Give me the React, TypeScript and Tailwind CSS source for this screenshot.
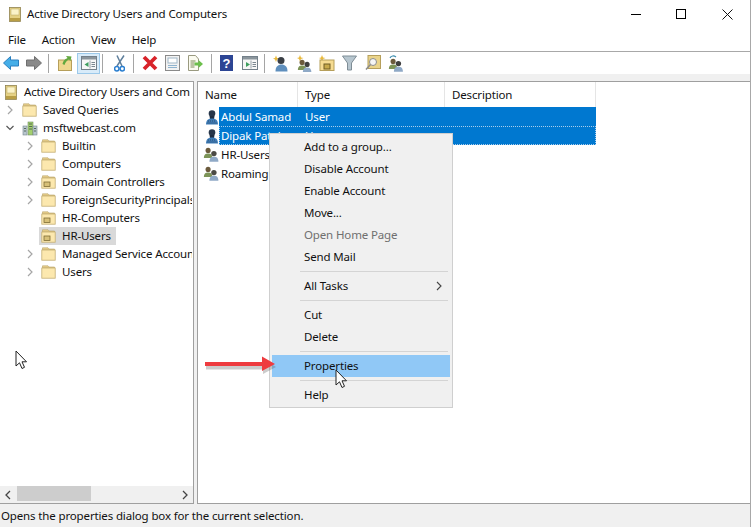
import React from "react";

const Folder = ({ ou = false }: { ou?: boolean }) => (
  <svg width="15" height="14" viewBox="0 0 15 14" className="shrink-0">
    <path d="M1.500 3 L1.500 0.800 L7 0.800 L8 2 L13.500 2 L13.500 3z" fill="#e8cf8a" stroke="#b9a469" strokeWidth="0.600" />
    <rect x="0.800" y="3" width="13.400" height="10.200" fill="#fce8ae" stroke="#c4ae72" strokeWidth="0.800" />
    {ou && <rect x="3" y="7" width="6" height="4.500" fill="#d7c078" stroke="#7d6b35" strokeWidth="0.800" />}
  </svg>
);

const BookIcon = () => (
  <svg width="12" height="15" viewBox="0 0 12 15" className="shrink-0">
    <rect x="0.500" y="0.500" width="11" height="14" fill="#e5d184" stroke="#8f8250" strokeWidth="0.800" />
    <rect x="2" y="2" width="8" height="6" fill="#fbf3c8" stroke="#b9a763" strokeWidth="0.500" />
    <rect x="1" y="11" width="10" height="3" fill="#b99e45" />
  </svg>
);

const Person = ({ x = 0, y = 0, s = 1, head = "#3d4a5c", body = "#3f74a8" }: { x?: number; y?: number; s?: number; head?: string; body?: string }) => (
  <g transform={`translate(${x} ${y}) scale(${s})`}>
    <circle cx="6" cy="4" r="3" fill={head} />
    <path d="M1 13 C1 9 3 7.500 6 7.500 C9 7.500 11 9 11 13z" fill={body} />
  </g>
);

const UserIcon = () => (
  <svg width="14" height="16" viewBox="0 0 14 16" className="shrink-0">
    <circle cx="7" cy="4.500" r="3.300" fill="#27364a" />
    <path d="M4.500 7 L9.500 7 L9 10 L5 10z" fill="#1f2d40" />
    <path d="M1 15.500 C1 11 3.500 9.500 7 9.500 C10.500 9.500 13 11 13 15.500z" fill="#3f7db8" />
    <path d="M3 12h8M2.500 14h9" stroke="#27364a" strokeWidth="0.700" strokeDasharray="1 1" />
  </svg>
);

const GroupIcon = () => (
  <svg width="16" height="15" viewBox="0 0 16 15" className="shrink-0">
    <Person x={0} y={0} s={0.85} head="#6b5a3c" body="#7d9458" />
    <Person x={5.500} y={3} s={0.9} head="#4b4a44" body="#8fa9c6" />
  </svg>
);

const Domain = () => (
  <svg width="16" height="16" viewBox="0 0 16 16" className="shrink-0">
    <rect x="1" y="6" width="4" height="9" fill="#b9c7cf" stroke="#76868e" strokeWidth="0.600" />
    <rect x="6" y="2" width="5" height="13" fill="#a3d06e" stroke="#6f8a60" strokeWidth="0.600" />
    <rect x="11" y="6" width="4" height="9" fill="#b9c7cf" stroke="#76868e" strokeWidth="0.600" />
    <path d="M7 4h3M7 6.500h3M7 9h3M2 8.500h2M2 11h2M12 8.500h2M12 11h2" stroke="#4d5e50" strokeWidth="0.900" />
  </svg>
);

const Chev = ({ open = false }: { open?: boolean }) => (
  <svg width="8" height="10" viewBox="0 0 8 10" className="shrink-0">
    {open ? <path d="M0.500 3 L4 6.500 L7.500 3" fill="none" stroke="#555" strokeWidth="1.200" /> : <path d="M2 1 L6 5 L2 9" fill="none" stroke="#a6a6a6" strokeWidth="1.200" />}
  </svg>
);

const Sep = ({ cls }: { cls: string }) => <div className={`w-px h-[19px] bg-[#a5a5a5] shrink-0 ${cls}`} />;

const Win = ({ arrow }: { arrow: "l" | "r" }) => (
  <svg width="16" height="14" viewBox="0 0 16 14" className="shrink-0">
    <rect x="0.500" y="0.500" width="15" height="13" fill="#f7f7f7" stroke="#74808a" />
    <rect x="1" y="1" width="14" height="2.500" fill="#8b959c" />
    <path d="M9 4.500v8" stroke="#9aa4aa" />
    {arrow === "l" ? <path d="M7.500 6 L3.500 8.500 L7.500 11z" fill="#3f9e5f" /> : <path d="M4 6 L8 8.500 L4 11z" fill="#3f9e5f" />}
    <path d="M10.500 6.500h3.500M10.500 8.500h3.500M10.500 10.500h3.500" stroke="#7b8790" />
  </svg>
);

const Toolbar = () => (
  <div className="h-[22px] flex items-center pl-[3px] bg-white">
    <svg width="16" height="14" viewBox="0 0 16 14" className="shrink-0"><path d="M0.500 7 L7.500 0.500 V4 H15.500 V10 H7.500 V13.500z" fill="#45aee8" stroke="#2a7fbf" /></svg>
    <svg width="16" height="14" viewBox="0 0 16 14" className="shrink-0 ml-[7px]"><path d="M15.500 7 L8.500 0.500 V4 H0.500 V10 H8.500 V13.500z" fill="#8a8a8a" stroke="#6f6f6f" /></svg>
    <Sep cls="ml-[6px]" />
    <svg width="14" height="16" viewBox="0 0 14 16" className="shrink-0 ml-[9px]"><rect x="0.500" y="5" width="13" height="10.500" fill="#efd78e" stroke="#b69f5b" /><path d="M4.500 9 C5.500 5 7.500 4 9.500 3 L8 1 L13.500 1.500 L12.500 6 L11 4.500 C9 5.500 7.500 7 6.500 10z" fill="#62a83f" /></svg>
    <div className="ml-[5px] w-[23px] h-[21px] shrink-0 flex items-center justify-center bg-[#d8ebf9] border border-[#9cc9ea]">
      <Win arrow="l" />
    </div>
    <Sep cls="ml-[2px]" />
    <svg width="11" height="17" viewBox="0 0 11 17" className="shrink-0 ml-[11px]"><path d="M10 0.500 L3 11M3 0.500 L8 11" stroke="#5f7f9c" strokeWidth="1.500" /><circle cx="2.800" cy="13.800" r="2.200" fill="none" stroke="#2b7fd0" strokeWidth="1.500" /><circle cx="8.300" cy="13.800" r="2.200" fill="none" stroke="#2b7fd0" strokeWidth="1.500" /></svg>
    <Sep cls="ml-[8px]" />
    <svg width="16" height="16" viewBox="0 0 16 16" className="shrink-0 ml-[8px]"><path d="M2 2 L14 14M14 2 L2 14" stroke="#d8232a" strokeWidth="3.800" /></svg>
    <svg width="15" height="16" viewBox="0 0 15 16" className="shrink-0 ml-[7px]"><rect x="0.500" y="0.500" width="14" height="15" fill="#f2f2f2" stroke="#8a8a8a" /><rect x="3" y="3" width="9" height="5" fill="#fff" stroke="#9fb6c6" /><path d="M3 10.500h9M3 12.500h9" stroke="#8fb4cf" /></svg>
    <svg width="15" height="16" viewBox="0 0 15 16" className="shrink-0 ml-[8px]"><path d="M0.500 0.500H7.500L10.500 4V15.500H0.500z" fill="#fbfbf0" stroke="#9a9a80" /><path d="M2.500 6h5M2.500 8h4M2.500 10h4M2.500 12h4" stroke="#7c8a58" /><path d="M6.500 7.500H10.500V5L15 9 10.500 13V10.500H6.500z" fill="#6cbf4b" /></svg>
    <Sep cls="ml-[8px]" />
    <svg width="13" height="16" viewBox="0 0 13 16" className="shrink-0 ml-[8px]"><rect width="13" height="16" fill="#2c4594" /><text x="6.500" y="13" textAnchor="middle" fontSize="13" fontWeight="700" fill="#fff" fontFamily="Liberation Sans">?</text></svg>
    <div className="ml-[9px] shrink-0 flex"><Win arrow="r" /></div>
    <Sep cls="ml-[6px]" />
    <svg width="15" height="17" viewBox="0 0 15 17" className="shrink-0 ml-[8px]"><path d="M3 0.500 L4 3 L6.500 3.500 L4 4.500 L3 7 L2 4.500 L0 3.500 L2 3z" fill="#e9b93b" /><circle cx="8" cy="5.500" r="3.500" fill="#3a3f45" /><path d="M2.500 16.500 C2.500 11.500 5 9.500 8.500 9.500 C12 9.500 14.500 11.500 14.500 16.500z" fill="#5f8fbd" /></svg>
    <svg width="15" height="17" viewBox="0 0 15 17" className="shrink-0 ml-[9px]"><path d="M3 0 L4 2.500 L6.500 3 L4 4 L3 6.500 L2 4 L0 3 L2 2.500z" fill="#e9b93b" /><Person x={0} y={4} s={0.85} head="#6b5a3c" body="#7d9458" /><Person x={5} y={6} s={0.85} head="#3f3f3f" body="#8fa9c6" /></svg>
    <svg width="16" height="16" viewBox="0 0 16 16" className="shrink-0 ml-[7px]"><path d="M3 0 L4 2.500 L6.500 3 L4 4 L3 6.500 L2 4 L0 3 L2 2.500z" fill="#e9b93b" /><rect x="1" y="5" width="14" height="10.500" fill="#f6dc92" stroke="#b69f5b" /><rect x="5" y="9" width="6" height="5" fill="#c7a94b" stroke="#6f5d24" /></svg>
    <svg width="15" height="16" viewBox="0 0 15 16" className="shrink-0 ml-[7px]"><path d="M0.500 1 H14.500 L9.500 8 V15 H5.500 V8z" fill="#b7c6cf" stroke="#7f8d96" /></svg>
    <svg width="16" height="16" viewBox="0 0 16 16" className="shrink-0 ml-[8px]"><rect x="3" y="0.500" width="12.500" height="13" fill="#ead48a" stroke="#b69f5b" /><circle cx="8" cy="7" r="3.500" fill="#f5f5f5" stroke="#8c8c8c" /><path d="M5.500 9.500 L1 14.500" stroke="#8c8c8c" strokeWidth="1.500" /></svg>
    <svg width="16" height="17" viewBox="0 0 16 17" className="shrink-0 ml-[7px]"><path d="M2 3 C3 0.500 6 0.500 8 2" fill="none" stroke="#3f8fb0" strokeWidth="1.200" /><Person x={0} y={3} s={0.85} head="#6b5a3c" body="#7d9458" /><Person x={5} y={5} s={0.9} head="#3f3f3f" body="#8fa9c6" /></svg>
  </div>
);

const TreeRow = ({ level, chev, open, icon, label, selected }: { level: number; chev?: boolean; open?: boolean; icon: React.ReactNode; label: string; selected?: boolean }) => (
  <div className="h-[18px] flex items-center whitespace-nowrap">
    <div className={`${level === 1 ? "w-[39px] pr-[5px]" : "w-[20px] pr-[6px]"} shrink-0 flex justify-end`}>{chev && <Chev open={open} />}</div>
    <div className={`flex items-center h-[18px] pl-[2px] ${selected ? "bg-[#d9d9d9] pr-[5px]" : ""}`}>
      <div className="w-[21px] shrink-0 flex">{icon}</div>
      <span>{label}</span>
    </div>
  </div>
);

const ListRow = ({ icon, name, type, selected, dotted }: { icon: React.ReactNode; name: string; type?: string; selected?: boolean; dotted?: boolean }) => (
  <div className="h-[19px] flex items-center whitespace-nowrap">
    <div className="w-[21px] shrink-0 flex justify-end">{icon}</div>
    <div className={`flex items-center h-[19px] w-[377px] ${selected ? "bg-[#0078d0] text-white" : ""} ${dotted ? "outline-1 outline-dotted -outline-offset-1 outline-[#a8cdec]" : ""}`}>
      <span className="pl-[2px] w-[86px] shrink-0">{name}</span>
      {type && <span>{type}</span>}
    </div>
  </div>
);

const Item = ({ label, disabled, hot, sub }: { label: string; disabled?: boolean; hot?: boolean; sub?: boolean }) => (
  <div className={`h-[22px] flex items-center pl-[32px] pr-[8px] justify-between mx-[2px] ${hot ? "bg-[#90c8f6]" : ""} ${disabled ? "text-[#6f6f6f]" : "text-[#111]"}`}>
    <span>{label}</span>
    {sub && (
      <svg width="6" height="10" viewBox="0 0 6 10"><path d="M1 1 L5 5 L1 9" fill="none" stroke="#444" strokeWidth="1.100" /></svg>
    )}
  </div>
);

const MSep = () => (
  <div className="h-[7px] flex items-center pl-[30px] pr-[4px]">
    <div className="h-px w-full bg-[#d4d4d4]" />
  </div>
);

const Cursor = ({ cls }: { cls: string }) => (
  <svg width="13" height="20" viewBox="0 0 13 20" className={`absolute ${cls}`}>
    <path d="M1 1 V16 L4.500 12.800 L7 18.500 L9.500 17.300 L7 11.800 H11.500z" fill="#fff" stroke="#222" strokeWidth="1" />
  </svg>
);

export default function App() {
  return (
    <div className="relative w-[752px] h-[527px] overflow-hidden bg-white text-[11.5px] tracking-[-0.14px] text-[#111] [font-family:'Noto_Sans',sans-serif]">
      <div className="w-[751px] h-full flex flex-col border-r border-[#a8a8a8]">
        <div className="h-[28px] flex items-center pl-[9px] shrink-0">
          <BookIcon />
          <span className="ml-[6px]">Active Directory Users and Computers</span>
          <div className="ml-auto flex items-center pr-[17px] gap-[36px]">
            <div className="w-[10px] h-px bg-black -mr-[1px]" />
            <div className="w-[10px] h-[10px] border border-black" />
            <svg width="11" height="11" viewBox="0 0 11 11"><path d="M0.500 0.500 L10.500 10.500M10.500 0.500 L0.500 10.500" stroke="#111" /></svg>
          </div>
        </div>
        <div className="h-[23px] flex items-center pl-[8px] gap-[16px] shrink-0">
          <span>File</span>
          <span>Action</span>
          <span>View</span>
          <span>Help</span>
        </div>
        <div className="h-px bg-[#a8a8a8] shrink-0" />
        <Toolbar />
        <div className="h-[7px] bg-[#f0f0f0] shrink-0" />
        <div className="flex-1 flex min-h-0 bg-[#f0f0f0]">
          <div className="w-[194px] shrink-0 flex flex-col bg-white border-t border-r border-b border-[#9f9f9f]">
            <div className="flex-1 overflow-hidden pt-[1px] w-[192px]">
              <div className="h-[18px] w-[190px] overflow-hidden flex items-center pl-[5px] whitespace-nowrap">
                <div className="w-[19px] shrink-0 flex"><BookIcon /></div>
                <span>Active Directory Users and Computers</span>
              </div>
              <TreeRow level={0} chev icon={<Folder />} label="Saved Queries" />
              <TreeRow level={0} chev open icon={<Domain />} label="msftwebcast.com" />
              <TreeRow level={1} chev icon={<Folder />} label="Builtin" />
              <TreeRow level={1} chev icon={<Folder />} label="Computers" />
              <TreeRow level={1} chev icon={<Folder ou />} label="Domain Controllers" />
              <TreeRow level={1} chev icon={<Folder />} label="ForeignSecurityPrincipals" />
              <TreeRow level={1} icon={<Folder ou />} label="HR-Computers" />
              <TreeRow level={1} icon={<Folder ou />} label="HR-Users" selected />
              <TreeRow level={1} chev icon={<Folder />} label="Managed Service Accounts" />
              <TreeRow level={1} chev icon={<Folder />} label="Users" />
            </div>
            <div className="h-[17px] shrink-0 bg-[#f0f0f0] flex items-center justify-between px-[5px] relative">
              <svg width="6" height="10" viewBox="0 0 6 10"><path d="M5 1 L1 5 L5 9" fill="none" stroke="#444" strokeWidth="1.300" /></svg>
              <div className="absolute left-[17px] top-0 w-[74px] h-[15px] bg-[#cdcdcd]" />
              <svg width="6" height="10" viewBox="0 0 6 10"><path d="M1 1 L5 5 L1 9" fill="none" stroke="#444" strokeWidth="1.300" /></svg>
            </div>
          </div>
          <div className="w-[3px] shrink-0" />
          <div className="flex-1 bg-white border border-r-0 border-[#9f9f9f] overflow-hidden">
            <div className="h-[25px] flex items-center">
              <div className="w-[100px] h-full pl-[7px] flex items-center border-r border-[#e5e5e5] shrink-0">Name</div>
              <div className="w-[147px] h-full pl-[7px] flex items-center border-r border-[#e5e5e5] shrink-0">Type</div>
              <div className="w-[151px] h-full pl-[7px] flex items-center border-r border-[#e5e5e5] shrink-0">Description</div>
            </div>
            <ListRow icon={<UserIcon />} name="Abdul Samad" type="User" selected />
            <ListRow icon={<UserIcon />} name="Dipak Patel" type="User" selected dotted />
            <ListRow icon={<GroupIcon />} name="HR-Users" />
            <ListRow icon={<GroupIcon />} name="RoamingUsers" />
          </div>
        </div>
        <div className="h-[23px] bg-[#f0f0f0] flex items-center pl-[1px] shrink-0">Opens the properties dialog box for the current selection.</div>
      </div>

      <div className="absolute left-[269px] top-[133px] w-[184px] bg-[#f0f0f0] border border-[#cfcfcf] pt-[2px] pb-[1px]">
        <Item label="Add to a group..." />
        <Item label="Disable Account" />
        <Item label="Enable Account" />
        <Item label="Move..." />
        <Item label="Open Home Page" disabled />
        <Item label="Send Mail" />
        <MSep />
        <Item label="All Tasks" sub />
        <MSep />
        <Item label="Cut" />
        <Item label="Delete" />
        <MSep />
        <Item label="Properties" hot />
        <MSep />
        <Item label="Help" />
      </div>

      <svg width="80" height="24" viewBox="0 0 80 24" className="absolute left-[203px] top-[354px]">
        <path d="M2 9 H59 V2.500 L72 10.500 L59 17.500 V13 H2z" fill="#555" opacity="0.300" transform="translate(1 2.500)" />
        <path d="M2 8 H59 V2.500 L72 10 L59 17 V12 H2z" fill="#ee3b3f" />
      </svg>
      <Cursor cls="left-[15px] top-[350px]" />
      <Cursor cls="left-[335px] top-[369px]" />
    </div>
  );
}
